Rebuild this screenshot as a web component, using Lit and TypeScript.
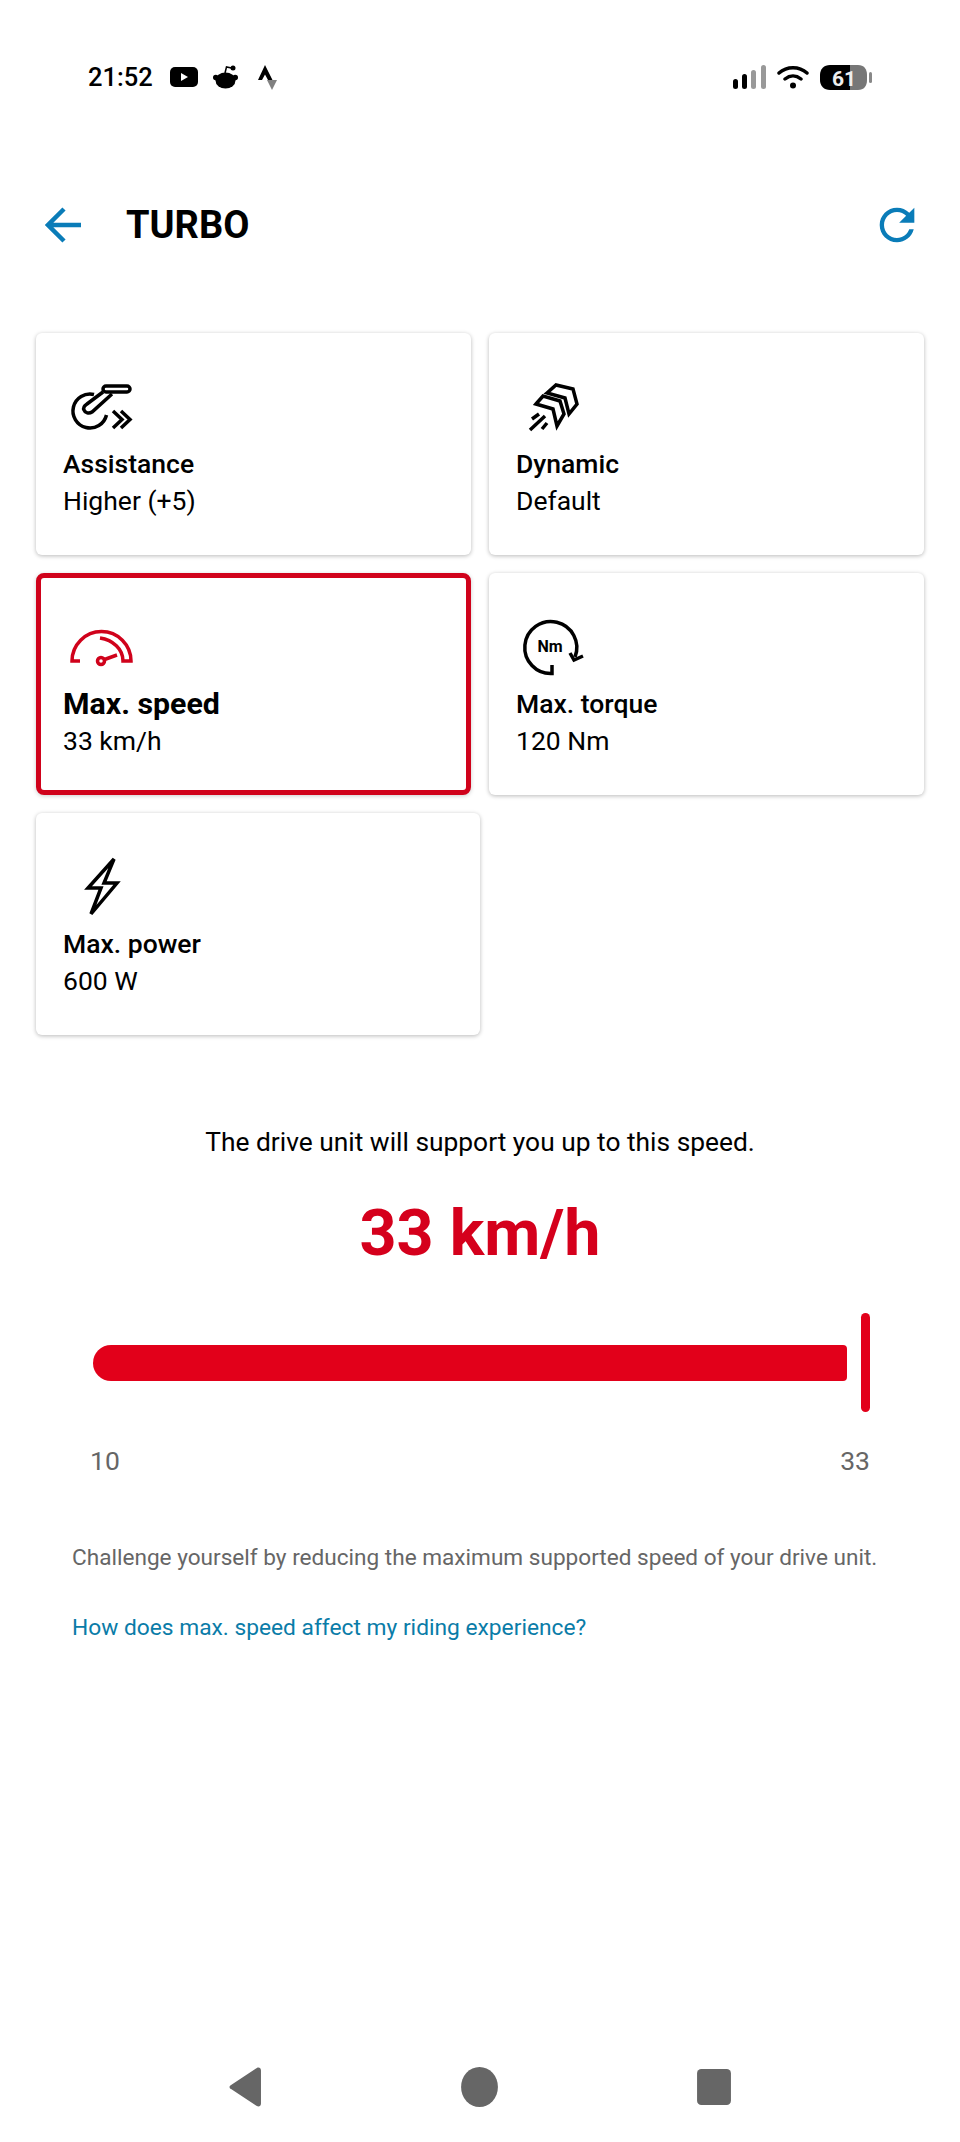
import { LitElement, css, html, svg } from "lit";
import { customElement } from "lit/decorators.js";

const ICONS = {
  assistance: svg`
    <path d="M31 27.500A17 17 0 1 0 43.500 48" />
    <path d="M40 25L24 37c-3 2-4 4-3 6 1 3 5 4 8 2l20-18" />
    <rect x="40" y="19" width="27" height="6" rx="3" />
    <path d="M50 44l9 8.500-9 8.500M58 44l9 8.500-9 8.500" />`,
  dynamic: svg`
    <path d="M31 26l9-8 17 4 4 15-8 10-4-16z" />
    <path d="M20 37l7-8 17 5 4 13-7 12-4-17z" />
    <path d="M16 52l7-5M14 63l15-14M26 62l5-6" />`,
  speed: svg`
    <path d="M17 54H9a29.500 29.500 0 0 1 59 0h-8c0-12-10-21-23-23" />
    <circle cx="38" cy="54" r="3.500" />
    <path d="M41.500 52.500L54 48" />`,
  torque: svg`
    <path d="M36 58v8.500A26 26 0 1 1 59 50" />
    <path d="M54 46l4 7 9-4" />`,
  power: svg`
    <path d="M51 12L25 41h13L28 67l26-31H41z" />`,
};

@customElement("app-root")
export class AppRoot extends LitElement {
  static override styles = css`
    :host {
      display: block;
      width: 960px;
      height: 2142px;
      background: #fff;
      color: #000;
      font-family: Roboto, "Liberation Sans", sans-serif;
      overflow: hidden;
    }
    .page {
      display: flex;
      flex-direction: column;
      height: 2142px;
    }
    .status {
      display: flex;
      align-items: center;
      height: 30px;
      margin-top: 62px;
      padding: 0 88px;
    }
    .time {
      font-size: 25.500px;
      font-weight: 500;
      width: 82px;
    }
    .status-left {
      display: flex;
      align-items: center;
      gap: 15px;
    }
    .strava {
      margin-left: 4px;
    }
    .status-right {
      margin-left: auto;
      display: flex;
      align-items: center;
      gap: 11px;
    }
    .header {
      display: flex;
      align-items: center;
      height: 60px;
      margin-top: 103px;
      padding: 0 37px 0 45px;
    }
    .back {
      width: 36px;
      height: 38px;
      display: block;
    }
    .title {
      font-size: 38px;
      font-weight: 700;
      margin-left: 45px;
    }
    .refresh {
      width: 52px;
      height: 52px;
      margin-left: auto;
      display: block;
    }
    .grid {
      display: grid;
      grid-template-columns: 435px 435px;
      gap: 18px;
      margin: 78px 0 0 36px;
    }
    .card {
      box-sizing: border-box;
      height: 222px;
      background: #fff;
      border-radius: 6px;
      box-shadow: 0 1px 4px rgba(0, 0, 0, 0.28);
      padding: 34px 0 0 27px;
    }
    .card.wide {
      width: 444px;
    }
    .card.on {
      border: 5px solid #d0021b;
      border-radius: 8px;
      padding: 29px 0 0 22px;
      box-shadow: 0 1px 4px rgba(0, 0, 0, 0.2);
    }
    .card svg {
      display: block;
      width: 72px;
      height: 72px;
      fill: none;
      stroke: #000;
      stroke-width: 3.500;
      overflow: visible;
    }
    .card.on svg {
      stroke: #d0021b;
    }
    .card text {
      fill: #000;
      stroke: none;
      font-size: 16px;
      font-weight: 700;
    }
    .name {
      font-size: 26.500px;
      font-weight: 500;
      line-height: 36px;
      margin-top: 7px;
    }
    .on .name {
      font-size: 30.300px;
      font-weight: 700;
    }
    .val {
      font-size: 26.500px;
      line-height: 36px;
      margin-top: 1px;
    }
    .lead {
      text-align: center;
      font-size: 26.350px;
      line-height: 36px;
      margin-top: 89px;
    }
    .big {
      text-align: center;
      color: #d5001c;
      font-size: 64.700px;
      font-weight: 700;
      line-height: 76px;
      margin-top: 35px;
    }
    .slider {
      display: flex;
      align-items: center;
      gap: 14px;
      margin: 42px 0 0 93px;
    }
    .track {
      width: 754px;
      height: 36px;
      background: #e2001a;
      border-radius: 18px 4px 4px 18px;
    }
    .thumb {
      width: 9px;
      height: 99px;
      background: #e2001a;
      border-radius: 5px;
    }
    .scale {
      display: flex;
      justify-content: space-between;
      color: #666;
      font-size: 26.500px;
      line-height: 36px;
      margin: 31px 90px 0 90px;
    }
    .note {
      color: #666;
      font-size: 22.600px;
      line-height: 32px;
      margin: 63px 0 0 72px;
    }
    .link {
      color: #0a7ca8;
      font-size: 22.750px;
      line-height: 32px;
      margin: 38px 0 0 72px;
    }
    .nav {
      display: flex;
      align-items: center;
      gap: 199px;
      margin: auto 0 35px 229px;
    }
  `;

  private card(icon: keyof typeof ICONS, name: string, val: string, cls = "") {
    return html`
      <div class="card ${cls}">
        <svg viewBox="0 0 72 72">
          ${ICONS[icon]}
          ${icon === "torque" ? svg`<text x="34" y="45" text-anchor="middle">Nm</text>` : ""}
        </svg>
        <div class="name">${name}</div>
        <div class="val">${val}</div>
      </div>
    `;
  }

  override render() {
    return html`
      <div class="page">
        <div class="status">
          <div class="time">21:52</div>
          <div class="status-left">
            <svg width="28" height="20" viewBox="0 0 28 20">
              <rect width="28" height="20" rx="5" />
              <path d="M11 6l7 4-7 4z" fill="#fff" />
            </svg>
            <svg width="26" height="24" viewBox="0 0 26 24">
              <ellipse cx="12.500" cy="15.500" rx="10" ry="8" />
              <circle cx="2.800" cy="12.500" r="2.800" />
              <circle cx="22.200" cy="12.500" r="2.800" />
              <path d="M12 8l1.500-6 5 1" fill="none" stroke="#000" stroke-width="1.500" />
              <circle cx="20" cy="3" r="2.500" />
            </svg>
            <svg class="strava" width="19" height="25" viewBox="0 0 19 25">
              <path d="M7 0l7.500 15H10L7 9.500 4 15H0z" />
              <path d="M9 15h10l-5 10z" fill="#808080" />
            </svg>
          </div>
          <div class="status-right">
            <svg width="33" height="24" viewBox="0 0 33 24">
              <rect x="0" y="14" width="5" height="10" rx="2.500" />
              <rect x="9" y="9" width="5" height="15" rx="2.500" />
              <rect x="18" y="5" width="5" height="19" rx="2.500" fill="#999" />
              <rect x="28" y="0" width="5" height="24" rx="2.500" fill="#999" />
            </svg>
            <svg width="32" height="24" viewBox="0 0 32 24">
              <path d="M2 8c8-7 20-7 28 0M8 14c5-4 11-4 16 0" fill="none" stroke="#000" stroke-width="3.500" stroke-linecap="round" />
              <circle cx="16" cy="20.500" r="3" />
            </svg>
            <svg width="52" height="25" viewBox="0 0 52 25">
              <path d="M10 0h20v25H10C4 25 0 21 0 15v-5C0 4 4 0 10 0z" />
              <path d="M30 0h8c6 0 9 4 9 10v5c0 6-3 10-9 10h-8z" fill="#777" />
              <rect x="49" y="7" width="3" height="11" rx="1.500" fill="#888" />
              <text x="24" y="20.500" text-anchor="middle" fill="#eee" font-size="21" font-weight="700" font-family="Roboto, sans-serif">61</text>
            </svg>
          </div>
        </div>

        <div class="header">
          <svg class="back" viewBox="0 0 36 38" fill="none" stroke="#0a7cb8" stroke-width="4.500">
            <path d="M36 19H4M19 3L3 19l16 16" />
          </svg>
          <div class="title">TURBO</div>
          <svg class="refresh" viewBox="0 0 24 24" fill="#0a7cb8">
            <path d="M17.650 6.350C16.200 4.900 14.210 4 12 4c-4.420 0-7.990 3.580-7.990 8s3.570 8 7.990 8c3.730 0 6.840-2.550 7.730-6h-2.080c-.820 2.330-3.040 4-5.650 4-3.310 0-6-2.690-6-6s2.690-6 6-6c1.660 0 3.140.690 4.220 1.780L13 11h7V4l-2.350 2.350z" />
          </svg>
        </div>

        <div class="grid">
          ${this.card("assistance", "Assistance", "Higher (+5)")}
          ${this.card("dynamic", "Dynamic", "Default")}
          ${this.card("speed", "Max. speed", "33 km/h", "on")}
          ${this.card("torque", "Max. torque", "120 Nm")}
          ${this.card("power", "Max. power", "600 W", "wide")}
        </div>

        <div class="lead">The drive unit will support you up to this speed.</div>
        <div class="big">33 km/h</div>

        <div class="slider">
          <div class="track"></div>
          <div class="thumb"></div>
        </div>
        <div class="scale"><span>10</span><span>33</span></div>

        <div class="note">Challenge yourself by reducing the maximum supported speed of your drive unit.</div>
        <div class="link">How does max. speed affect my riding experience?</div>

        <div class="nav">
          <svg width="33" height="40" viewBox="0 0 32 38" fill="#666">
            <path d="M27 .500c2-1 4 0 4 2.500v32c0 2.500-2 3.500-4 2.500L2 21c-2-1-2-3 0-4z" />
          </svg>
          <svg width="37" height="40" viewBox="0 0 35 38" fill="#666">
            <ellipse cx="17.500" cy="19" rx="17.500" ry="19" />
          </svg>
          <svg width="34" height="36" viewBox="0 0 32 34" fill="#666">
            <rect width="32" height="34" rx="4" />
          </svg>
        </div>
      </div>
    `;
  }
}
